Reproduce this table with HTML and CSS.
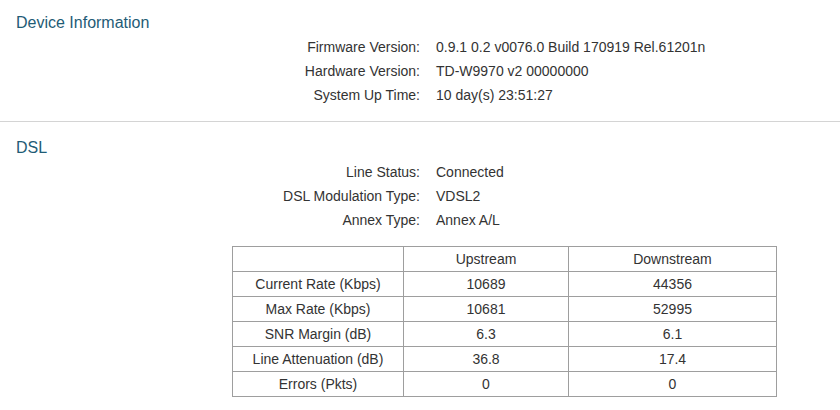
FILE: index.html
```html
<html>
<head>
<meta name="viewport" content="width=device-width, initial-scale=1.0">
<link rel="stylesheet" href="styles.css">
</head>
<body>

<div class="section first">
<div class="title">Device Information</div>
<div class="row"><span class="label">Firmware Version:</span><span class="value">0.9.1 0.2 v0076.0 Build 170919 Rel.61201n</span></div>
<div class="row"><span class="label">Hardware Version:</span><span class="value">TD-W9970 v2 00000000</span></div>
<div class="row"><span class="label">System Up Time:</span><span class="value">10 day(s) 23:51:27</span></div>
</div>

<div class="section">
<div class="title">DSL</div>
<div class="row"><span class="label">Line Status:</span><span class="value">Connected</span></div>
<div class="row"><span class="label">DSL Modulation Type:</span><span class="value">VDSL2</span></div>
<div class="row"><span class="label">Annex Type:</span><span class="value">Annex A/L</span></div>

<table class="stats">
<colgroup><col class="c1"><col class="c2"><col class="c3"></colgroup>
<tr><td></td><td>Upstream</td><td>Downstream</td></tr>
<tr><td>Current Rate (Kbps)</td><td>10689</td><td>44356</td></tr>
<tr><td>Max Rate (Kbps)</td><td>10681</td><td>52995</td></tr>
<tr><td>SNR Margin (dB)</td><td>6.3</td><td>6.1</td></tr>
<tr><td>Line Attenuation (dB)</td><td>36.8</td><td>17.4</td></tr>
<tr><td>Errors (Pkts)</td><td>0</td><td>0</td></tr>
</table>
</div>

</body>
</html>
```

FILE: styles.css
```css
* {
    box-sizing: border-box;
}

body{
margin:0;
background:white;
font-family:"Liberation Sans", Arial, sans-serif;
font-size:14px;
color:#333;
}

.section{
padding:14px 0 14px 0;
border-bottom:1px solid #d4d4d4;
}

.section.first{
padding-top:11px;
}

.title{
padding-left:16px;
font-size:16px;
line-height:24px;
color:#1f5c76;
}

.row{
display:flex;
line-height:24px;
}

.label{
width:420px;
text-align:right;
}

.value{
padding-left:16px;
}

.stats{
margin:14px 0 0 232px;
border-collapse:collapse;
table-layout:fixed;
width:544px;
font-size:14px;
color:#333;
}

.c1{ width:171px; }
.c2{ width:165px; }
.c3{ width:208px; }

.stats td{
border:1px solid #9e9e9e;
padding:0;
line-height:24px;
text-align:center;
}
```
